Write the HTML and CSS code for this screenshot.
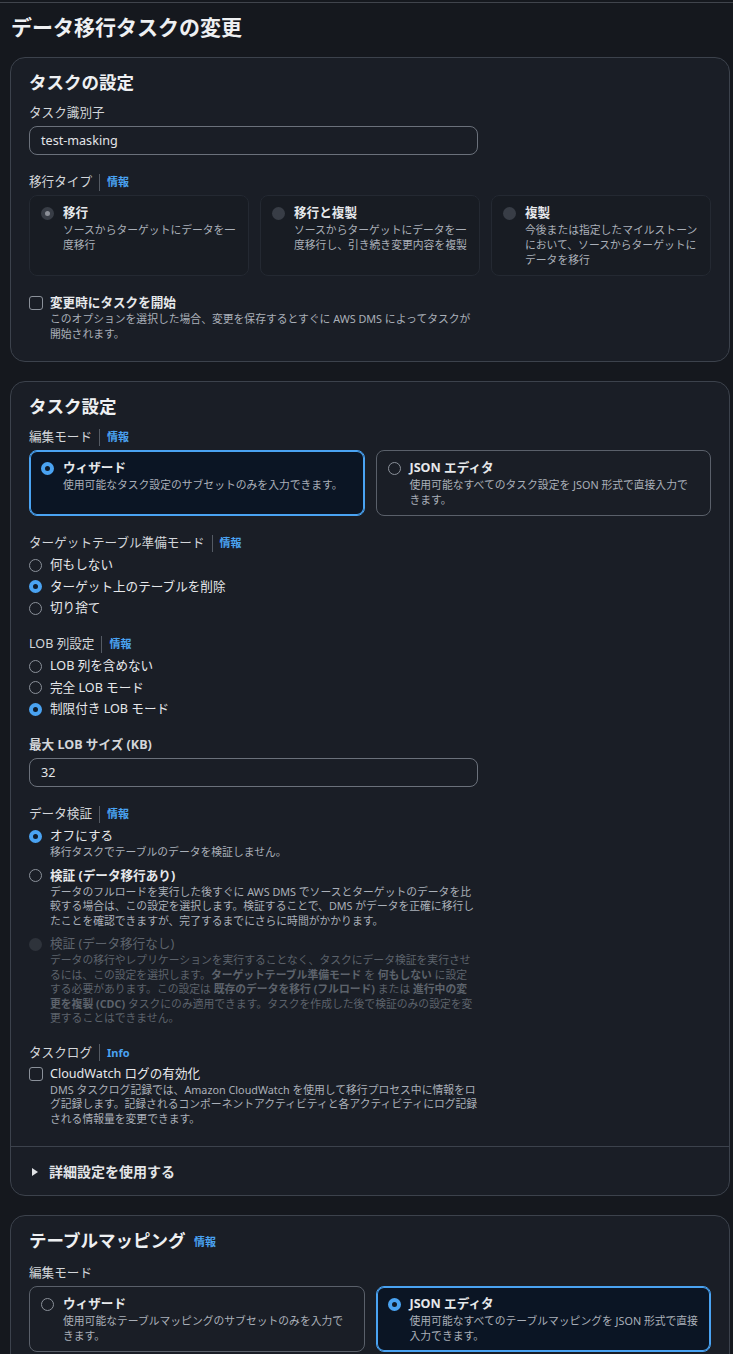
FILE: index.html
```html
<!DOCTYPE html>
<html lang="ja">
<head>
    <meta charset="UTF-8">
    <meta name="viewport" content="width=device-width, initial-scale=1.0">
    <title>データ移行タスクの変更</title>
    <link rel="stylesheet" href="styles.css">
</head>
<body>
    <div class="topbar"></div>
    <h1 class="page-title">データ移行タスクの変更</h1>

    <!-- タスクの設定 -->
    <section class="card">
        <div class="card-body">
            <h2 class="card-title">タスクの設定</h2>

            <div class="label">タスク識別子</div>
            <div class="input">test-masking</div>

            <div class="label gap-top">移行タイプ <span class="sep"></span><a class="info">情報</a></div>
            <div class="tiles three">
                <div class="tile plain">
                    <span class="radio muted checked"></span>
                    <div class="option-body">
                        <div class="option-title bold">移行</div>
                        <div class="desc">ソースからターゲットにデータを一度移行</div>
                    </div>
                </div>
                <div class="tile plain">
                    <span class="radio muted"></span>
                    <div class="option-body">
                        <div class="option-title bold">移行と複製</div>
                        <div class="desc">ソースからターゲットにデータを一度移行し、引き続き変更内容を複製</div>
                    </div>
                </div>
                <div class="tile plain">
                    <span class="radio muted"></span>
                    <div class="option-body">
                        <div class="option-title bold">複製</div>
                        <div class="desc">今後または指定したマイルストーンにおいて、ソースからターゲットにデータを移行</div>
                    </div>
                </div>
            </div>

            <div class="option check-row gap-top">
                <span class="checkbox"></span>
                <div class="option-body">
                    <div class="option-title bold">変更時にタスクを開始</div>
                    <div class="desc">このオプションを選択した場合、変更を保存するとすぐに AWS DMS によってタスクが開始されます。</div>
                </div>
            </div>
        </div>
    </section>

    <!-- タスク設定 -->
    <section class="card">
        <div class="card-body">
            <h2 class="card-title">タスク設定</h2>

            <div class="label">編集モード <span class="sep"></span><a class="info">情報</a></div>
            <div class="tiles two">
                <div class="tile selected">
                    <span class="radio checked"></span>
                    <div class="option-body">
                        <div class="option-title bold">ウィザード</div>
                        <div class="desc">使用可能なタスク設定のサブセットのみを入力できます。</div>
                    </div>
                </div>
                <div class="tile">
                    <span class="radio"></span>
                    <div class="option-body">
                        <div class="option-title bold">JSON エディタ</div>
                        <div class="desc">使用可能なすべてのタスク設定を JSON 形式で直接入力で<br>きます。</div>
                    </div>
                </div>
            </div>

            <div class="label gap-top">ターゲットテーブル準備モード <span class="sep"></span><a class="info">情報</a></div>
            <div class="radio-group">
                <div class="option"><span class="radio"></span><div class="option-title">何もしない</div></div>
                <div class="option"><span class="radio checked"></span><div class="option-title">ターゲット上のテーブルを削除</div></div>
                <div class="option"><span class="radio"></span><div class="option-title">切り捨て</div></div>
            </div>

            <div class="label gap-top">LOB 列設定 <span class="sep"></span><a class="info">情報</a></div>
            <div class="radio-group">
                <div class="option"><span class="radio"></span><div class="option-title">LOB 列を含めない</div></div>
                <div class="option"><span class="radio"></span><div class="option-title">完全 LOB モード</div></div>
                <div class="option"><span class="radio checked"></span><div class="option-title">制限付き LOB モード</div></div>
            </div>

            <div class="label gap-top bold">最大 LOB サイズ (KB)</div>
            <div class="input">32</div>

            <div class="label gap-top">データ検証 <span class="sep"></span><a class="info">情報</a></div>
            <div class="radio-group wide">
                <div class="option">
                    <span class="radio checked"></span>
                    <div class="option-body">
                        <div class="option-title">オフにする</div>
                        <div class="desc">移行タスクでテーブルのデータを検証しません。</div>
                    </div>
                </div>
                <div class="option">
                    <span class="radio"></span>
                    <div class="option-body">
                        <div class="option-title bold">検証 (データ移行あり)</div>
                        <div class="desc">データのフルロードを実行した後すぐに AWS DMS でソースとターゲットのデータを比較する場合は、この設定を選択します。検証することで、DMS がデータを正確に移行したことを確認できますが、完了するまでにさらに時間がかかります。</div>
                    </div>
                </div>
                <div class="option disabled">
                    <span class="radio off"></span>
                    <div class="option-body">
                        <div class="option-title">検証 (データ移行なし)</div>
                        <div class="desc">データの移行やレプリケーションを実行することなく、タスクにデータ検証を実行させるには、この設定を選択します。<b>ターゲットテーブル準備モード</b> を <b>何もしない</b> に設定する必要があります。この設定は <b>既存のデータを移行 (フルロード)</b> または <b>進行中の変更を複製 (CDC)</b> タスクにのみ適用できます。タスクを作成した後で検証のみの設定を変更することはできません。</div>
                    </div>
                </div>
            </div>

            <div class="label gap-top">タスクログ <span class="sep"></span><a class="info">Info</a></div>
            <div class="option check-row log-row">
                <span class="checkbox"></span>
                <div class="option-body">
                    <div class="option-title">CloudWatch ログの有効化</div>
                    <div class="desc">DMS タスクログ記録では、Amazon CloudWatch を使用して移行プロセス中に情報をログ記録します。記録されるコンポーネントアクティビティと各アクティビティにログ記録される情報量を変更できます。</div>
                </div>
            </div>
        </div>
        <div class="expander">
            <svg class="caret" width="8" height="10" viewBox="0 0 8 10"><path d="M1 1 L7 5 L1 9 Z" fill="#dfe1e4"/></svg>
            <span>詳細設定を使用する</span>
        </div>
    </section>

    <!-- テーブルマッピング -->
    <section class="card">
        <div class="card-body">
            <h2 class="card-title">テーブルマッピング <a class="info small">情報</a></h2>

            <div class="label">編集モード</div>
            <div class="tiles two">
                <div class="tile">
                    <span class="radio"></span>
                    <div class="option-body">
                        <div class="option-title bold">ウィザード</div>
                        <div class="desc">使用可能なテーブルマッピングのサブセットのみを入力できます。</div>
                    </div>
                </div>
                <div class="tile selected">
                    <span class="radio checked"></span>
                    <div class="option-body">
                        <div class="option-title bold">JSON エディタ</div>
                        <div class="desc">使用可能なすべてのテーブルマッピングを JSON 形式で直接入力できます。</div>
                    </div>
                </div>
            </div>
        </div>
    </section>
</body>
</html>
```

FILE: styles.css
```css
body {
    margin: 0;
    padding: 0 3px 0 10px;
    background-color: #15181e;
    color: #e3e5e8;
    font-family: "Noto Sans", "Noto Sans CJK JP", sans-serif;
    font-size: 12.6px;
}
.topbar {
    height: 2px;
    margin-left: -10px;
    margin-right: -3px;
    border-bottom: 1px solid #40444c;
}
.page-title {
    margin: 10px 0 0 1px;
    font-size: 21px;
    line-height: 28px;
    font-weight: 700;
    color: #eef0f2;
}
.card {
    margin-top: 16px;
    margin-bottom: 19px;
    background-color: #1a1e26;
    border: 1px solid #3c424c;
    border-radius: 15px;
    overflow: hidden;
}
.card + .card {
    margin-top: 0;
}
.card-body {
    padding: 12px 18px 20px 18px;
}
.card-title {
    margin: 0;
    font-size: 17.5px;
    line-height: 24px;
    font-weight: 700;
    color: #eef0f2;
}
.label {
    display: flex;
    align-items: center;
    margin-top: 10px;
    line-height: 18px;
    color: #d3d6da;
}
.label.gap-top {
    margin-top: 18px;
}
.bold {
    font-weight: 700;
}
.sep {
    display: inline-block;
    width: 1px;
    height: 17px;
    margin: 0 7px 0 7px;
    background-color: #545a63;
}
.info {
    color: #4aa3f2;
    font-size: 11px;
    font-weight: 700;
}
.info.small {
    margin-left: 4px;
    font-size: 11px;
    vertical-align: 1px;
}
.input {
    box-sizing: border-box;
    width: 449px;
    height: 29px;
    margin-top: 4px;
    padding: 0 11px;
    line-height: 27px;
    border: 1px solid #6b717b;
    border-radius: 8px;
    color: #e3e5e8;
}
.tiles {
    display: grid;
    gap: 11px;
    margin-top: 4px;
}
.tiles.three {
    grid-template-columns: 1fr 1fr 1fr;
}
.tiles.two {
    grid-template-columns: 1fr 1fr;
}
.tile {
    display: flex;
    align-items: flex-start;
    gap: 9px;
    padding: 8px 10px 8px 11px;
    border: 1px solid #5a606a;
    border-radius: 8px;
}
.tile.plain {
    border-color: #242932;
    background-color: #181c23;
}
.tile.selected {
    border-color: #4aa3f2;
    box-shadow: inset 0 0 0 1px #4aa3f2;
    background-color: #0b1524;
}
.option {
    display: flex;
    align-items: flex-start;
    gap: 8px;
}
.option-body {
    display: flex;
    flex-direction: column;
}
.option-title {
    line-height: 18px;
    color: #e6e8eb;
}
.desc {
    font-size: 10.8px;
    line-height: 15px;
    color: #aab0b9;
}
.radio-group {
    display: flex;
    flex-direction: column;
    gap: 3.5px;
    margin-top: 4px;
}
.radio-group.wide {
    gap: 7px;
}
.radio-group.wide .desc,
.check-row .desc {
    line-height: 14.5px;
}
.radio-group .option-body,
.check-row .option-body {
    width: 425px;
}
.log-row .option-body {
    width: 429px;
}
.option.check-row {
    margin-top: 3px;
    gap: 7px;
}
.option.check-row.gap-top {
    margin-top: 18px;
}
.option.disabled .option-title,
.option.disabled .desc {
    color: #5d636c;
}
.radio {
    flex: none;
    box-sizing: border-box;
    width: 13px;
    height: 13px;
    margin-top: 2.5px;
    border: 1.5px solid #8b919a;
    border-radius: 50%;
}
.radio.checked {
    border: 4px solid #4aa3f2;
    background-color: #0f1b2a;
}
.radio.muted {
    border: none;
    background-color: #383d46;
}
.radio.muted.checked {
    border: 4px solid #383d46;
    background-color: #8c9098;
}
.radio.off {
    border: none;
    background-color: #2e333b;
}
.checkbox {
    flex: none;
    box-sizing: border-box;
    width: 14px;
    height: 14px;
    margin-top: 2px;
    border: 1.5px solid #8b919a;
    border-radius: 3px;
}
.expander {
    display: flex;
    align-items: center;
    gap: 10px;
    padding: 15px 18px 13px 20px;
    border-top: 1px solid #3c424c;
    font-size: 14px;
    line-height: 20px;
    font-weight: 700;
    color: #e3e5e8;
}
```
